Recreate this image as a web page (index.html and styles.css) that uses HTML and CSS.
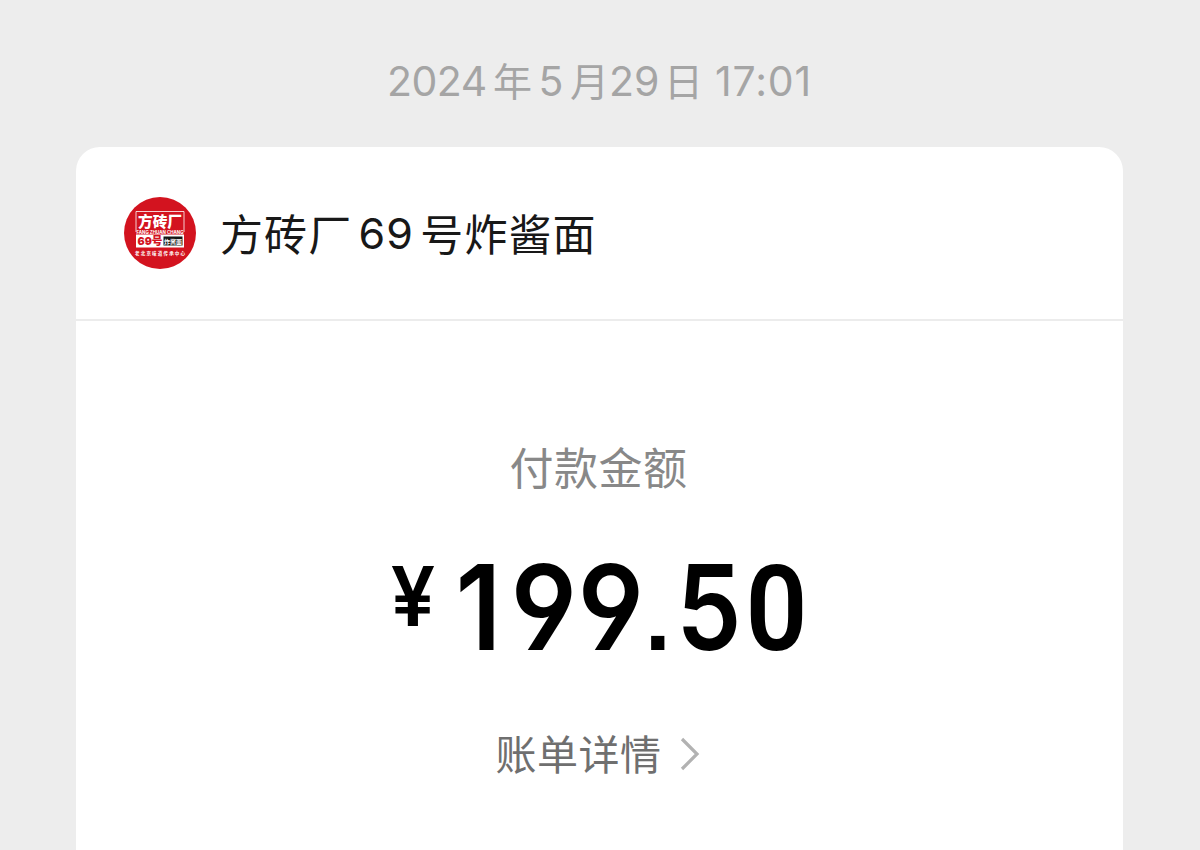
FILE: index.html
```html
<!DOCTYPE html>
<html lang="zh-CN">
<head>
  <meta charset="UTF-8">
  <meta name="viewport" content="width=device-width, initial-scale=1.0">
  <title>支付凭证</title>
  <link rel="stylesheet" href="styles.css">
</head>
<body>

  <div class="time"><span class="year">2024</span>年<span class="month">5</span>月<span class="day">29</span>日<span class="clock">17:01</span></div>

  <div class="card">
    <!-- 商家 -->
    <div class="card-header">
      <svg class="logo" viewBox="0 0 72 72">
        <circle cx="36" cy="36" r="36" fill="#d3131f"/>
        <path d="M12 35V14.5H60V35" fill="none" stroke="#fff" stroke-width=".8"/>
        <text class="logo-name" x="14" y="30" textLength="44" lengthAdjust="spacingAndGlyphs">方砖厂</text>
        <text class="logo-pinyin" x="12.5" y="36.6" textLength="47" lengthAdjust="spacingAndGlyphs">FANG ZHUAN CHANG</text>
        <rect x="12" y="37.5" width="48" height="13" fill="#fff"/>
        <text class="logo-num" x="13.5" y="48" textLength="25" lengthAdjust="spacingAndGlyphs">69号</text>
        <rect x="39.5" y="39.5" width="19" height="9" fill="#151515"/>
        <text class="logo-dish" x="40" y="46.5" textLength="18">炸酱面</text>
        <text class="logo-slogan" x="11" y="58" textLength="50">老北京味道传承中心</text>
      </svg>
      <div class="shop">方砖厂<span class="shop-num">69</span>号炸酱面</div>
    </div>

    <!-- 金额 -->
    <div class="card-body">
      <div class="label">付款金额</div>
      <div class="amount"><span class="yen">¥</span><span class="one">1</span><span class="nine">9</span><span class="nine">9</span><span class="dot">.</span><span class="five">5</span><span class="zero">0</span></div>
      <div class="detail">
        账单详情
        <svg class="arrow" viewBox="0 0 20 34"><path d="M2 2L17 17L2 32" fill="none" stroke="#b2b2b2" stroke-width="3.2"/></svg>
      </div>
    </div>
  </div>

</body>
</html>
```
FILE: styles.css
```css
* {
  box-sizing: border-box;
}

body {
  margin: 0;
  height: 850px;
  overflow: hidden;
  background-color: #ededed;
  font-family: Inter, "Noto Sans CJK SC", sans-serif;
}

.time {
  height: 147px;
  padding: 51px 0 0 387px;
  font-size: 39px;
  line-height: 60px;
  color: #a5a5a5;
  white-space: nowrap;
}

.time span {
  display: inline-block;
  font-size: 41px;
}

.time .year {
  width: 106px;
  letter-spacing: -0.5px;
}

.month {
  width: 38px;
  text-align: center;
}

.day {
  width: 55px;
}

.clock {
  margin-left: 12px;
  letter-spacing: 0.8px;
}

.card {
  width: 1047px;
  height: 730px;
  margin-left: 76px;
  background-color: #fff;
  border-radius: 24px 24px 0 0;
}

.card-header {
  display: flex;
  align-items: center;
  height: 174px;
  padding: 0 48px;
  border-bottom: 2px solid #ececec;
}

.logo {
  width: 72px;
  height: 72px;
  margin-right: 24px;
}

.logo text {
  fill: #fff;
  font-family: Inter, "Noto Sans CJK SC", sans-serif;
  font-weight: bold;
}

.logo .logo-name {
  font-size: 15px;
  font-weight: 900;
}

.logo .logo-pinyin {
  font-size: 4.5px;
}

.logo .logo-num {
  font-size: 11px;
  font-weight: 900;
  fill: #d3131f;
}

.logo .logo-dish {
  font-size: 6px;
}

.logo .logo-slogan {
  font-size: 4.5px;
}

.shop {
  padding-top: 3px;
  font-size: 43px;
  line-height: 60px;
  letter-spacing: 1.1px;
  color: #181818;
}

.shop-num {
  display: inline-block;
  width: 68px;
  text-align: center;
  transform: translateY(-2px);
}

.card-body {
  display: flex;
  flex-direction: column;
  align-items: center;
}

.label {
  margin-top: 118px;
  padding-right: 2px;
  font-size: 44px;
  line-height: 60px;
  letter-spacing: 0.5px;
  color: #888;
}

.amount {
  display: flex;
  align-items: baseline;
  height: 120px;
  margin-top: 48px;
  padding-right: 9px;
  color: #000;
  font-size: 118px;
  line-height: 120px;
  font-weight: 600;
}

.amount span {
  display: flex;
  justify-content: center;
  width: 67.5px;
}

.amount .yen {
  align-self: flex-start;
  width: 58px;
  font-size: 83px;
  line-height: 98px;
  transform: scaleX(0.95);
}

.amount .one {
  padding-left: 6px;
  transform: scaleX(0.92);
}

.amount .nine {
  font-feature-settings: "cv04", "ss01";
  transform: scaleX(0.93);
}

.amount .dot {
  width: 26px;
  font-family: "Liberation Sans", sans-serif;
  font-size: 94px;
  font-weight: bold;
}

.amount .five {
  width: 76px;
  transform: scaleX(0.88);
}

.amount .zero {
  width: 59px;
  font-family: Roboto, sans-serif;
  transform: scaleX(0.92);
}

.detail {
  display: flex;
  align-items: center;
  margin-top: 58px;
  padding-right: 4px;
  font-size: 41px;
  line-height: 60px;
  letter-spacing: 0.5px;
  color: #6f6f6f;
}

.arrow {
  width: 20px;
  height: 34px;
  margin: 0 0 2px 18px;
}
```
